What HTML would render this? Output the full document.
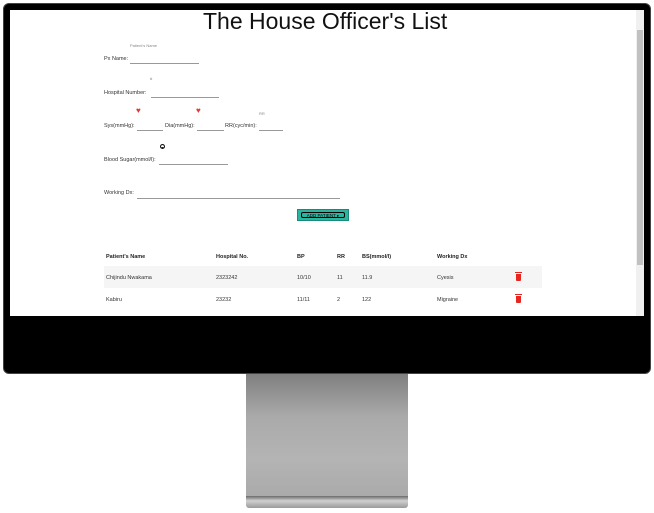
<!DOCTYPE html>
<html><head><meta charset="utf-8"><style>
*{margin:0;padding:0;box-sizing:border-box}
body{width:654px;height:513px;background:#fff;position:relative;overflow:hidden;font-family:"Liberation Sans",sans-serif;color:#222}
.mon{position:absolute;left:3px;top:3px;width:648px;height:371px;background:#000;border-radius:6px;border:1px solid #444}
.scr{position:absolute;left:10px;top:10px;width:634px;height:306px;background:#fff;overflow:hidden}
.sb{position:absolute;left:636px;top:10px;width:8px;height:306px;background:#f0f0f0}
.th{position:absolute;left:637px;top:30px;width:6px;height:235px;background:#c1c1c1}
.a{position:absolute;white-space:nowrap}
.t{font-size:5.5px;color:#333}
.ln{position:absolute;height:1px;background:#999}
.stand{position:absolute;left:246px;top:374px;width:162px;height:122px;background:linear-gradient(#7f7f7f,#a9aaa9 35%,#b4b4b4 70%,#aaa)}
.base{position:absolute;left:246px;top:496px;width:162px;height:12px;background:linear-gradient(#6a6a6a,#d0d0d0 40%,#9a9a9a);border-radius:0 0 3px 3px}
.trash{position:absolute;width:5px;height:7px;background:#e8261f;border-radius:0 0 1px 1px}
.trash:before{content:"";position:absolute;left:-1px;top:-2px;width:7px;height:1px;background:#e8261f}
</style></head><body>
<div class="mon"></div>
<div class="scr">
<div class="a" style="left:193px;top:-2px;font-size:23px;color:#111;font-weight:300">The House Officer's List</div>
<div class="a" style="left:120px;top:33px;font-size:4px;color:#888">Patient's Name</div>
<div class="a t" style="left:94px;top:46px">Px Name:</div>
<div class="ln" style="left:120px;top:53px;width:69px"></div>
<div class="a" style="left:140px;top:66px;font-size:4px;color:#777">#</div>
<div class="a t" style="left:94px;top:80px">Hospital Number:</div>
<div class="ln" style="left:141px;top:87px;width:68px"></div>
<div class="a" style="left:126px;top:96px;font-size:8px;color:#e53935">♥</div>
<div class="a" style="left:186px;top:96px;font-size:8px;color:#e53935">♥</div>
<div class="a" style="left:249px;top:101px;font-size:4px;color:#888">RR</div>
<div class="a t" style="left:94px;top:113px">Sys(mmHg):</div>
<div class="ln" style="left:127px;top:120px;width:26px"></div>
<div class="a t" style="left:155px;top:113px">Dia(mmHg):</div>
<div class="ln" style="left:187px;top:120px;width:27px"></div>
<div class="a t" style="left:215px;top:113px">RR(cyc/min):</div>
<div class="ln" style="left:249px;top:120px;width:24px"></div>
<div class="a" style="left:150px;top:134px;width:5px;height:5px;border-radius:50%;background:#111;border:1px solid #111;box-shadow:inset 0 2px 0 #fff"></div>
<div class="a t" style="left:94px;top:147px">Blood Sugar(mmol/l):</div>
<div class="ln" style="left:149px;top:154px;width:69px"></div>
<div class="a t" style="left:94px;top:180px">Working Dx:</div>
<div class="ln" style="left:127px;top:188px;width:203px"></div>
<div class="a" style="left:287px;top:199px;width:52px;height:12px;background:#2bb5a0;border:1px solid #1a8a7a;padding:2px 3px"><div style="height:6px;border:1px solid #000;border-radius:2px;font-size:4.5px;line-height:5px;text-align:center;color:#000">ADD PATIENT ▸</div></div>
<div class="a" style="left:94px;top:256px;width:438px;height:22px;background:#f5f5f5"></div>
<div class="a" style="left:96px;top:244px;font-size:5.5px;font-weight:bold">Patient's Name</div>
<div class="a" style="left:206px;top:244px;font-size:5.5px;font-weight:bold">Hospital No.</div>
<div class="a" style="left:287px;top:244px;font-size:5.5px;font-weight:bold">BP</div>
<div class="a" style="left:327px;top:244px;font-size:5.5px;font-weight:bold">RR</div>
<div class="a" style="left:352px;top:244px;font-size:5.5px;font-weight:bold">BS(mmol/l)</div>
<div class="a" style="left:427px;top:244px;font-size:5.5px;font-weight:bold">Working Dx</div>
<div class="a t" style="left:96px;top:265px">Chijindu Nwakama</div>
<div class="a t" style="left:206px;top:265px">2323242</div>
<div class="a t" style="left:287px;top:265px">10/10</div>
<div class="a t" style="left:327px;top:265px">11</div>
<div class="a t" style="left:352px;top:265px">11.9</div>
<div class="a t" style="left:427px;top:265px">Cyesis</div>
<div class="trash" style="left:506px;top:264px"></div>
<div class="a t" style="left:96px;top:287px">Kabiru</div>
<div class="a t" style="left:206px;top:287px">23232</div>
<div class="a t" style="left:287px;top:287px">11/11</div>
<div class="a t" style="left:327px;top:287px">2</div>
<div class="a t" style="left:352px;top:287px">122</div>
<div class="a t" style="left:427px;top:287px">Migraine</div>
<div class="trash" style="left:506px;top:286px"></div>
</div>
<div class="sb"></div><div class="th"></div>
<div class="stand"></div><div class="base"></div>
</body></html>
